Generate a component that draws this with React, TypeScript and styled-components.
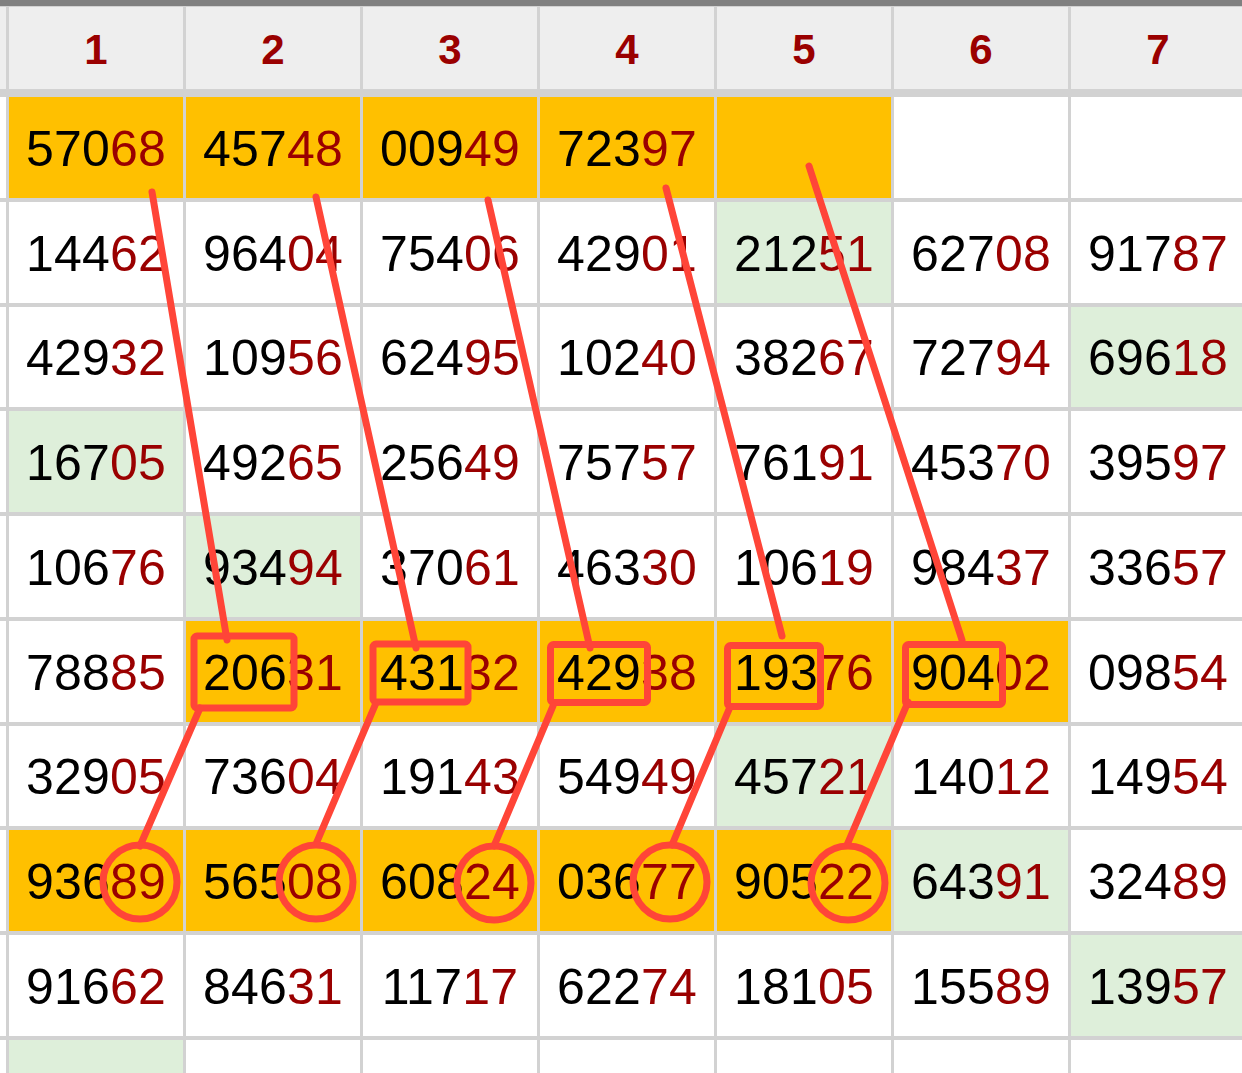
import React from "react";
import styled, { createGlobalStyle } from "styled-components";

const Global = createGlobalStyle`
  html, body { margin: 0; padding: 0; background: #ffffff; overflow: hidden; }
  body { font-family: "Liberation Sans", Arial, sans-serif; }
`;

type Bg = "o" | "g" | "w";
type CellData = { v: string; bg: Bg };

const BG: Record<Bg, string> = { o: "#FFC000", g: "#DEEFDA", w: "#FFFFFF" };

const raw: string[] = [
  "57068o 45748o 00949o 72397o _o _w _w",
  "14462w 96404w 75406w 42901w 21251g 62708w 91787w",
  "42932w 10956w 62495w 10240w 38267w 72794w 69618g",
  "16705g 49265w 25649w 75757w 76191w 45370w 39597w",
  "10676w 93494g 37061w 46330w 10619w 98437w 33657w",
  "78885w 20631o 43132o 42938o 19376o 90402o 09854w",
  "32905w 73604w 19143w 54949w 45721g 14012w 14954w",
  "93689o 56508o 60824o 03677o 90522o 64391g 32489w",
  "91662w 84631w 11717w 62274w 18105w 15589w 13957g",
  "_g _w _w _w _w _w _w",
];

const rows: CellData[][] = raw.map((r) =>
  r.split(" ").map((t) => ({
    v: t.slice(0, -1) === "_" ? "" : t.slice(0, -1),
    bg: t.slice(-1) as Bg,
  }))
);

const Page = styled.div`
  position: relative;
  width: 1242px;
  height: 1073px;
  overflow: hidden;
`;

const TopBar = styled.div`
  height: 6px;
  background: #808080;
`;

const Grid = styled.div`
  display: grid;
  grid-template-columns: 6px repeat(7, 174px);
  grid-template-rows: 86px repeat(10, 100.75px);
  column-gap: 3px;
  row-gap: 4px;
  padding-top: 1px;
  background: #d2d2d2;
  width: 1245px;
`;

const HeaderCell = styled.div`
  display: flex;
  align-items: center;
  justify-content: center;
  background: #eeeeee;
  border-bottom: 4px solid #d2d2d2;
  padding-top: 3px;
  box-sizing: border-box;
  color: #9a0000;
  font-weight: 700;
  font-size: 42px;
`;

const Cell = styled.div<{ $bg: Bg }>`
  display: flex;
  align-items: center;
  justify-content: center;
  padding-top: 3px;
  box-sizing: border-box;
  background: ${(p) => BG[p.$bg]};
  color: #000000;
  font-size: 50px;
  letter-spacing: 0.2px;
`;

const EdgeCell = styled.div<{ $head?: boolean }>`
  background: ${(p) => (p.$head ? "#eeeeee" : "#ffffff")};
  ${(p) => (p.$head ? "border-bottom: 4px solid #d2d2d2;" : "")}
`;

const Tail = styled.span`
  color: #9a0000;
`;

const Overlay = styled.svg`
  position: absolute;
  left: 0;
  top: 0;
  pointer-events: none;
`;

const RED = "#FF4538";

const topLines = [
  [152, 192, 227, 640],
  [316, 197, 416, 648],
  [488, 200, 590, 648],
  [666, 188, 782, 636],
  [809, 166, 962, 640],
];
const boxes = [
  [194, 636, 100, 72],
  [373, 644, 95, 58],
  [550.5, 644.5, 97, 58],
  [727.5, 645.5, 93, 61],
  [905.5, 644.5, 97, 60],
];
const lowLines = [
  [200, 708, 140, 846],
  [376, 703, 316, 844],
  [553, 706, 494, 846],
  [730, 707, 672, 845],
  [908, 702, 847, 845],
];
const circles = [
  [140, 882],
  [316, 882],
  [494, 883],
  [670, 882],
  [848, 883],
];

export default function App() {
  return (
    <>
      <Global />
      <Page>
        <TopBar />
        <Grid>
          <EdgeCell $head />
          {[1, 2, 3, 4, 5, 6, 7].map((n) => (
            <HeaderCell key={n}>{n}</HeaderCell>
          ))}
          {rows.map((row, ri) => (
            <React.Fragment key={ri}>
              <EdgeCell />
              {row.map((c, ci) => (
                <Cell key={ci} $bg={c.bg}>
                  {c.v && (
                    <>
                      {c.v.slice(0, 3)}
                      <Tail>{c.v.slice(3)}</Tail>
                    </>
                  )}
                </Cell>
              ))}
            </React.Fragment>
          ))}
        </Grid>
        <Overlay width="1242" height="1073" viewBox="0 0 1242 1073">
          <g stroke={RED} strokeWidth={7} fill="none" strokeLinecap="round" strokeLinejoin="round">
            {topLines.map(([x1, y1, x2, y2], i) => (
              <line key={"t" + i} x1={x1} y1={y1} x2={x2} y2={y2} />
            ))}
            {boxes.map(([x, y, w, h], i) => (
              <rect key={"b" + i} x={x} y={y} width={w} height={h} rx={3} />
            ))}
            {lowLines.map(([x1, y1, x2, y2], i) => (
              <line key={"l" + i} x1={x1} y1={y1} x2={x2} y2={y2} />
            ))}
            {circles.map(([cx, cy], i) => (
              <circle key={"c" + i} cx={cx} cy={cy} r={37} />
            ))}
          </g>
        </Overlay>
      </Page>
    </>
  );
}
